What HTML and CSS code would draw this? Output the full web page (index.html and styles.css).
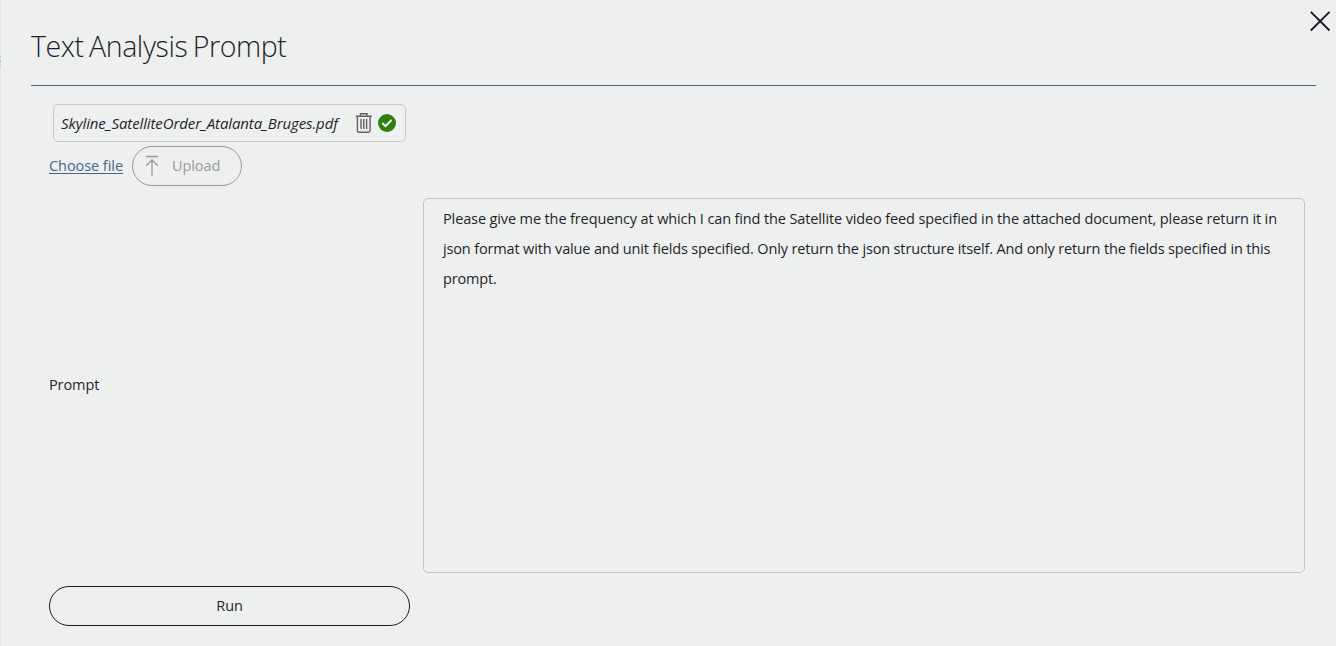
FILE: index.html
```html
<!DOCTYPE html>
<html lang="en">
<head>
<meta charset="utf-8">
<title>Text Analysis Prompt</title>
<link rel="stylesheet" href="styles.css">
</head>
<body>
<main class="panel">
  <span class="edge"></span>
  <button class="close" aria-label="Close"><svg width="22" height="22" viewBox="0 0 22 22"><path d="M1.800 1.800 20.500 20.500M20.500 1.800 1.800 20.500" fill="none" stroke="#1a1a28" stroke-width="1.9"/></svg></button>
  <header class="header"><h1 class="title">Text Analysis Prompt</h1></header>
  <section class="form">
    <div class="file">
      <span class="file-name">Skyline_SatelliteOrder_Atalanta_Bruges.pdf</span>
      <svg class="trash" width="18" height="20" viewBox="0 0 18 20" fill="none" stroke="#626366" stroke-width="1.4"><path d="M.8 3.200h16M5.500 3V.8h6.500V3M2.400 3.500v14.300q0 1.400 1.400 1.400h9.900q1.400 0 1.400-1.400V3.500M6 6v10M8.800 6v10M11.600 6v10"/></svg>
      <svg class="check" width="18" height="18" viewBox="0 0 18 18"><circle cx="9" cy="9" r="9" fill="#2c800c"/><path d="m4.300 9 3.200 3.200 6-6.200" fill="none" stroke="#fff" stroke-width="1.900"/></svg>
    </div>
    <div class="actions">
      <a class="choose" href="#">Choose file</a>
      <button class="upload" disabled>
        <svg width="14" height="22" viewBox="0 0 14 22" fill="none" stroke="#999b9c" stroke-width="1.3"><path d="M1 1.500h12M7 21V5.500M1.200 10.800 7 5l5.800 5.800"/></svg>
        <span class="upload-text">Upload</span>
      </button>
    </div>
    <div class="prompt-row">
      <label class="label" for="prompt">Prompt</label>
      <div class="prompt" id="prompt"><span class="l1">Please give me the frequency at which I can find the Satellite video feed specified in the attached document, please return it in</span><br><span class="l2">json format with value and unit fields specified. Only return the json structure itself. And only return the fields specified in this</span><br><span class="l2">prompt.</span></div>
    </div>
    <button class="run">Run</button>
  </section>
</main>
</body>
</html>
```
FILE: styles.css
```css
* { box-sizing: border-box; }
body {
  margin: 0;
  background: #eef0ef;
  color: #1f1f2c;
  font: 14.5px/20px "Segoe UI", "Open Sans", "Noto Sans", sans-serif;
  letter-spacing: -0.1px;
}
button { font: inherit; color: inherit; letter-spacing: inherit; background: none; padding: 0; }
.panel {
  position: relative;
  height: 646px;
  padding: 0 20px 0 30px;
  border-left: 1px solid #e2e4e4;
}
.edge {
  position: absolute;
  left: -1px;
  top: 56px;
  width: 1px;
  height: 10px;
  background: linear-gradient(#c9c9c9 0 2px, #cfe6ea 2px 5px, #b4c4ca 5px 7px, #e2e4e4 7px 9px, #b8b8b8 9px);
}
.close {
  position: absolute;
  top: 10px;
  right: 5px;
  width: 22px;
  height: 22px;
  border: 0;
}
.close svg { display: block; }
.header { height: 86px; border-bottom: 1px solid #44678a; }
.title {
  margin: 0;
  padding-top: 26px;
  font-size: 28.5px;
  line-height: 40px;
  font-weight: 300;
  letter-spacing: -0.4px;
  word-spacing: -1.7px;
  white-space: nowrap;
}
.form { padding: 18px 11px 0 18px; }
.file {
  display: flex;
  align-items: center;
  width: 353px;
  height: 38px;
  margin-left: 4px;
  padding: 0 9px 0 7px;
  border: 1px solid #c6c8c8;
  border-radius: 5px;
}
.file-name {
  flex: 1;
  padding-bottom: 1px;
  font-size: 15px;
  font-style: italic;
  letter-spacing: -0.11px;
  white-space: nowrap;
}
.trash { margin-right: 5px; }
.actions { display: flex; align-items: center; gap: 9px; margin-top: 4px; }
.choose { width: 74px; color: #44678a; letter-spacing: -0.06px; white-space: nowrap; text-underline-offset: 2px; }
.upload {
  display: flex;
  align-items: center;
  gap: 13px;
  width: 110px;
  height: 40px;
  padding-left: 12px;
  border: 1px solid #999b9c;
  border-radius: 20px;
  color: #999b9c;
}
.prompt-row { display: flex; align-items: center; margin-top: 12px; }
.label { width: 374px; padding-bottom: 2px; }
.prompt {
  width: 882px;
  height: 375px;
  padding: 5px 19px;
  border: 1px solid #c2c4c4;
  border-radius: 5px;
  line-height: 30px;
  white-space: nowrap;
}
.l1 { letter-spacing: -0.123px; }
.l2 { letter-spacing: -0.152px; }
.run {
  display: block;
  width: 361px;
  height: 40px;
  margin-top: 13px;
  border: 1px solid #1a1a28;
  border-radius: 20px;
}
```
